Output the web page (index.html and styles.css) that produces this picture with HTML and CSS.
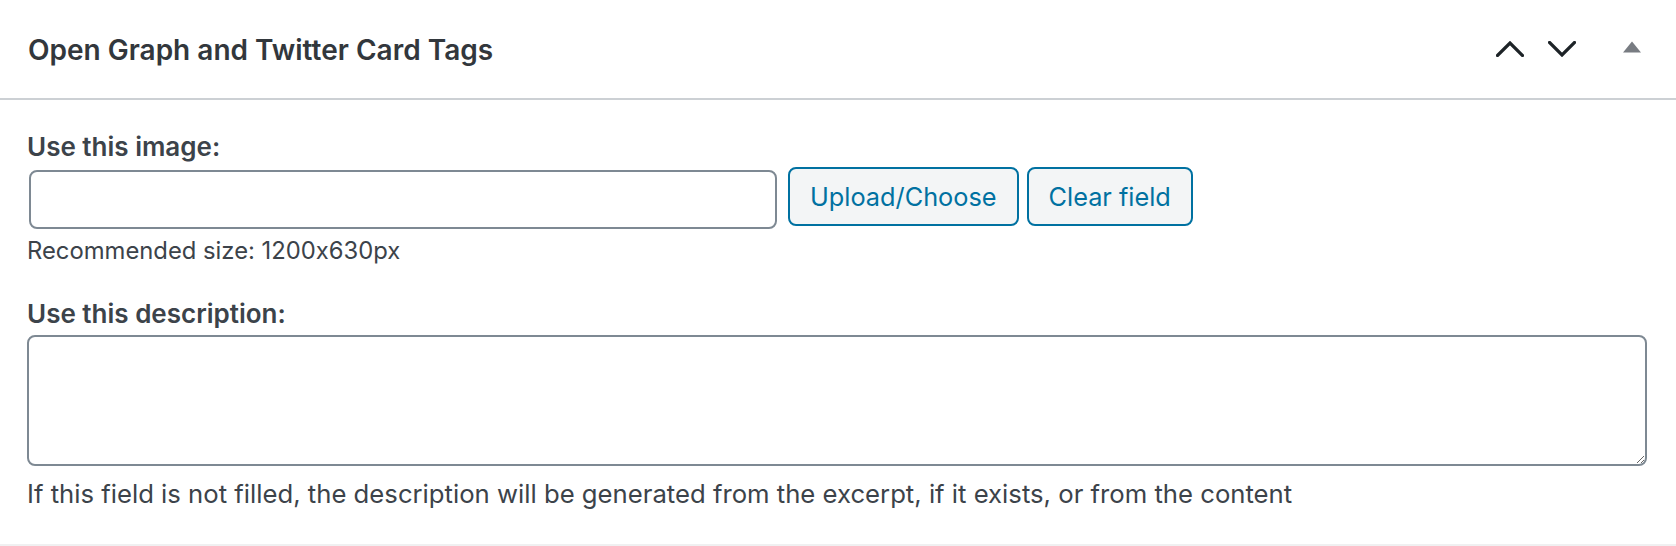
FILE: index.html
```html
<!DOCTYPE html>
<html lang="en">
<head>
<meta charset="utf-8">
<title>Open Graph and Twitter Card Tags</title>
<link rel="stylesheet" href="styles.css">
</head>
<body>
<div class="postbox">
  <div class="postbox-header">
    <h2 class="hndle">Open Graph and Twitter Card Tags</h2>
    <div class="handle-actions">
      <button class="handle-btn" type="button" aria-label="Move up">
        <svg width="28" height="16" viewBox="0 0 28 16"><polyline points="1.5,14.5 14,2 26.5,14.5" fill="none" stroke="#1d2327" stroke-width="3.2" stroke-linecap="square" stroke-linejoin="miter"/></svg>
      </button>
      <button class="handle-btn" type="button" aria-label="Move down">
        <svg width="28" height="16" viewBox="0 0 28 16"><polyline points="1.5,1.5 14,14 26.5,1.5" fill="none" stroke="#1d2327" stroke-width="3.2" stroke-linecap="square" stroke-linejoin="miter"/></svg>
      </button>
      <button class="handle-btn toggle" type="button" aria-label="Toggle panel">
        <svg width="18" height="12" viewBox="0 0 18 12"><polygon points="0,11.5 9,0.5 18,11.5" fill="#787c82"/></svg>
      </button>
    </div>
  </div>
  <div class="inside">
    <label class="field-label" for="og-image">Use this image:</label>
    <div class="image-row">
      <input class="text-input" id="og-image" type="text">
      <button class="button" type="button">Upload/Choose</button>
      <button class="button" type="button">Clear field</button>
    </div>
    <p class="note">Recommended size: 1200x630px</p>
    <label class="field-label desc-label" for="og-desc">Use this description:</label>
    <textarea class="textarea" id="og-desc"></textarea>
    <p class="help">If this field is not filled, the description will be generated from the excerpt, if it exists, or from the content</p>
  </div>
</div>
</body>
</html>
```
FILE: styles.css
```css
* { box-sizing: border-box; }
html, body { margin: 0; padding: 0; background: #ffffff; }
body {
  font-family: Inter, "Noto Sans", "Liberation Sans", sans-serif;
  font-feature-settings: "calt" 0;
  color: #3c434a;
  width: 1676px;
  height: 546px;
  overflow: hidden;
}
.postbox {
  background: #fff;
  border-bottom: 2px solid #f0f0f1;
  height: 546px;
}
.postbox-header {
  display: flex;
  align-items: center;
  justify-content: space-between;
  height: 100px;
  border-bottom: 2px solid #ccd0d4;
}
.hndle {
  margin: 0;
  padding-left: 28px;
  font-size: 28px;
  font-weight: 600;
  color: #32373c;
  line-height: 1;
  padding-top: 2px;
}
.handle-actions {
  display: flex;
  align-items: center;
  height: 100%;
}
.handle-btn {
  width: 52px;
  height: 100%;
  padding: 0;
  margin: 0;
  border: 0;
  background: transparent;
  display: flex;
  align-items: center;
  justify-content: center;
}
.handle-btn.toggle { width: 88px; padding-bottom: 4px; }
.inside {
  padding: 30px 29px 0 27px;
}
.field-label {
  display: block;
  font-size: 26px;
  font-weight: 600;
  line-height: 34px;
  color: #3c434a;
}
.image-row {
  display: flex;
  align-items: flex-start;
  gap: 11px;
  margin-top: 3px;
}
.text-input {
  width: 748px;
  height: 59px;
  margin: 3px 0 0 2px;
  border: 2px solid #7e8993;
  border-radius: 8px;
  background: #fff;
  font: inherit;
}
.button {
  height: 59px;
  padding: 0 20px;
  border: 2px solid #0071a1;
  border-radius: 8px;
  background: #f3f5f6;
  color: #0071a1;
  font-family: inherit;
  font-size: 25.3px;
  font-weight: 400;
}
.image-row .button + .button { margin-left: -3px; }
.note {
  margin: 5px 0 0 0;
  font-size: 23.8px;
  line-height: 34px;
  color: #3c434a;
}
.desc-label { margin-top: 29px; }
.textarea {
  display: block;
  width: 1620px;
  height: 131px;
  margin-top: 4px;
  border: 2px solid #7e8993;
  border-radius: 8px;
  background: #fff;
  font: inherit;
  resize: both;
}
.help {
  margin: 11px 0 0 0;
  font-size: 25.7px;
  line-height: 34px;
  color: #3c434a;
}
```
